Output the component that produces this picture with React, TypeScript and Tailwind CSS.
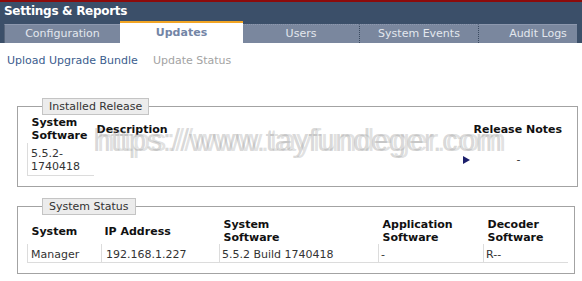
import type { ReactNode } from "react";

const tabs = [
  { label: "Configuration", className: "w-[116px] border-l border-[#56647a]" },
  { label: "Updates", active: true, className: "w-[123px]" },
  { label: "Users", className: "w-[117px] border-r border-dotted border-[#3a4a60]" },
  { label: "System Events", className: "w-[119px] border-r border-dotted border-[#3a4a60]" },
  { label: "Audit Logs", className: "w-[118px] shrink-0" },
];

function Legend({ children }: { children: ReactNode }) {
  return (
    <legend className="ml-[15px] h-[17px] border border-[#c4c4c4] bg-[#ececec] px-[6px] leading-[15px] text-[#333]">
      {children}
    </legend>
  );
}

function PlayArrow() {
  return (
    <svg width="7" height="8" viewBox="0 0 7 8" aria-hidden>
      <polygon points="0,0 7,4 0,8" fill="#1c1f6b" />
    </svg>
  );
}

export default function App() {
  return (
    <div className="relative h-[281px] w-[582px] overflow-hidden bg-white font-['DejaVu_Sans',Verdana,sans-serif] text-[11px] text-[#333]">
      <div className="h-[2px] bg-[#8c0b0b]" />

      <div className="flex h-[41px] flex-col bg-[#3b4f69]">
        <div className="h-[19px] pl-[4px] pt-[2px] text-[12px] font-bold leading-[15px] tracking-[-0.3px] text-white">
          Settings &amp; Reports
        </div>
        <div className="flex h-[22px] w-[577px] items-end overflow-hidden pl-[4px]">
          {tabs.map((t) =>
            t.active ? (
              <div
                key={t.label}
                className={`flex h-[22px] shrink-0 justify-center border-t-2 border-[#f2a524] bg-white pt-[3px] font-bold leading-[13px] text-[#7385a6] ${t.className}`}
              >
                {t.label}
              </div>
            ) : (
              <div
                key={t.label}
                className={`flex h-[19px] shrink-0 items-center justify-center border-t border-t-[#8d98ae] bg-[#7a879e] text-[#e3e7ee] ${t.className}`}
              >
                {t.label}
              </div>
            ),
          )}
        </div>
      </div>

      <div className="mt-[11px] flex h-[14px] gap-[15px] pl-[7px] leading-[14px]">
        <span className="text-[#3b5d8e]">Upload Upgrade Bundle</span>
        <span className="text-[#a3a3a3]">Update Status</span>
      </div>

      <fieldset className="ml-[17px] mt-[30px] w-[561px] border border-[#a3a3a3] pb-[10px] pl-[9px]">
        <Legend>Installed Release</Legend>
        <table className="w-[539px] table-fixed border-collapse">
          <colgroup>
            <col className="w-[66px]" />
            <col className="w-[363px]" />
            <col className="w-[14px]" />
            <col className="w-[96px]" />
          </colgroup>
          <thead>
            <tr className="text-left align-middle font-bold leading-[13px] text-[#111]">
              <th className="pb-[1px] pl-[4px] pt-[1px]">
                System
                <br />
                Software
              </th>
              <th className="pl-[3px]">Description</th>
              <th />
              <th className="whitespace-nowrap pl-[3px]">Release Notes</th>
            </tr>
          </thead>
          <tbody>
            <tr className="align-middle leading-[13px]">
              <td className="border-b border-l border-[#dcdcdc] pb-[2px] pl-[3px] pt-[4px]">
                5.5.2-
                <br />
                1740418
              </td>
              <td />
              <td className="pl-[6px] pt-[2px]">
                <PlayArrow />
              </td>
              <td className="text-center">-</td>
            </tr>
          </tbody>
        </table>
      </fieldset>

      <fieldset className="ml-[17px] mt-[11px] w-[558px] border border-[#a3a3a3] pb-[10px] pl-[9px]">
        <Legend>System Status</Legend>
        <table className="mt-[3px] w-[540px] table-fixed border-collapse">
          <colgroup>
            <col className="w-[74px]" />
            <col className="w-[118px]" />
            <col className="w-[159px]" />
            <col className="w-[105px]" />
            <col className="w-[84px]" />
          </colgroup>
          <thead>
            <tr className="text-left align-middle font-bold leading-[13px] text-[#111]">
              <th className="pb-[1px] pl-[4px] pt-[1px]">System</th>
              <th className="pl-[3px]">IP Address</th>
              <th className="pl-[4px]">
                System
                <br />
                Software
              </th>
              <th className="pl-[4px]">
                Application
                <br />
                Software
              </th>
              <th className="pl-[4px]">
                Decoder
                <br />
                Software
              </th>
            </tr>
          </thead>
          <tbody>
            <tr className="leading-[13px]">
              <td className="border-b border-l border-[#dcdcdc] pb-[1px] pl-[3px] pt-[4px]">Manager</td>
              <td className="border-b border-l border-[#dcdcdc] pb-[1px] pl-[4px] pt-[4px]">192.168.1.227</td>
              <td className="border-b border-l border-[#dcdcdc] pb-[1px] pl-[2px] pt-[4px]">5.5.2 Build 1740418</td>
              <td className="border-b border-l border-[#dcdcdc] pb-[1px] pl-[2px] pt-[4px]">-</td>
              <td className="border-b border-l border-[#dcdcdc] pb-[1px] pl-[2px] pt-[4px]">R--</td>
            </tr>
          </tbody>
        </table>
      </fieldset>

      <span className="pointer-events-none absolute left-[93px] top-[124px] whitespace-nowrap font-['Liberation_Sans',Arial,sans-serif] text-[32px] leading-none text-[#9a9a9a]/40">
        https://www.tayfundeger.com
      </span>
      <span className="pointer-events-none absolute left-[97px] top-[124px] whitespace-nowrap font-['Liberation_Sans',Arial,sans-serif] text-[32px] leading-none text-[#9a9a9a]/30">
        https://www.tayfundeger.com
      </span>
    </div>
  );
}
